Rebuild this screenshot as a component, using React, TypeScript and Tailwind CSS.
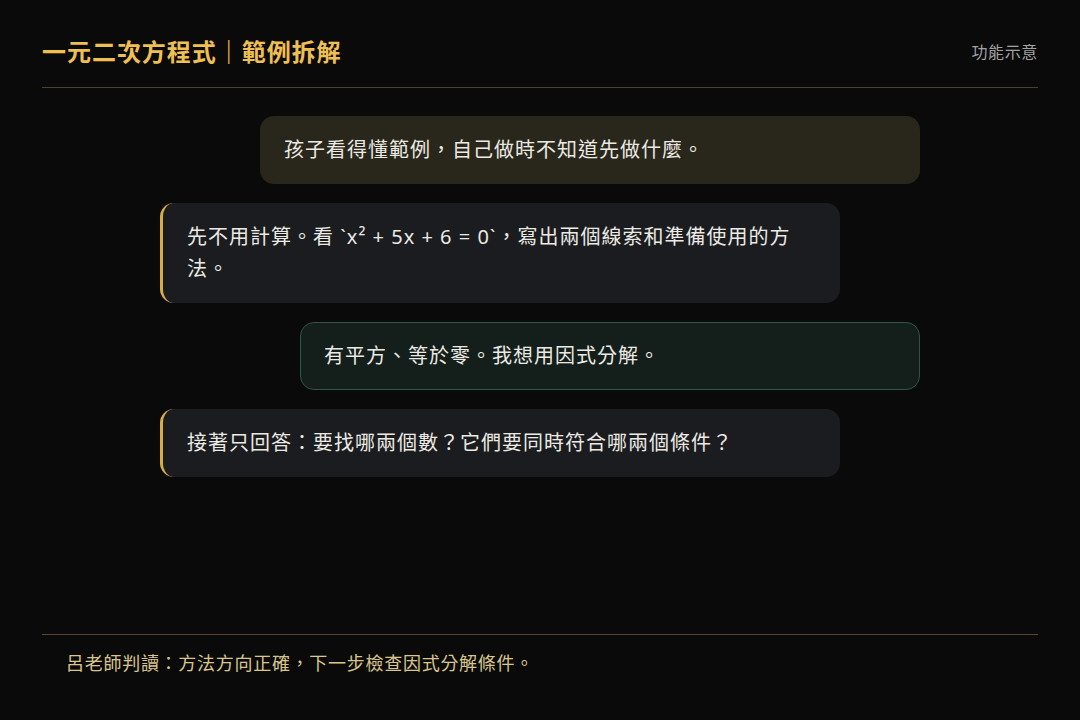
const messages = [
  { role: 'student', text: '孩子看得懂範例，自己做時不知道先做什麼。', width: 'w-[660px]' },
  { role: 'teacher', text: '先不用計算。看 `x² + 5x + 6 = 0`，寫出兩個線索和準備使用的方法。', width: 'w-[680px]' },
  { role: 'answer', text: '有平方、等於零。我想用因式分解。', width: 'w-[620px]' },
  { role: 'teacher', text: '接著只回答：要找哪兩個數？它們要同時符合哪兩個條件？', width: 'w-[680px]' },
];

function Bubble({ role, text, width }: { role: string; text: string; width: string }) {
  if (role === 'teacher') {
    return (
      <div className={`${width} self-start rounded-[14px] border-l-[3px] border-[#d9ad45] bg-[#1b1c1f] py-[18px] pl-[24px] pr-[40px]`}>
        <p className="text-[20px] leading-[1.6] tracking-[0.05em] text-[#eceae4]">{text}</p>
      </div>
    );
  }
  if (role === 'answer') {
    return (
      <div className={`${width} self-end rounded-[14px] border border-[#2c5646] bg-[#141e1b] py-[17px] px-[23px]`}>
        <p className="text-[20px] leading-[1.6] tracking-[0.05em] text-[#eceae4]">{text}</p>
      </div>
    );
  }
  return (
    <div className={`${width} self-end rounded-[14px] bg-[#29271b] py-[18px] px-[24px]`}>
      <p className="text-[20px] leading-[1.6] tracking-[0.05em] text-[#eceae4]">{text}</p>
    </div>
  );
}

export default function App() {
  return (
    <div
      className="flex min-h-screen flex-col bg-[#0a0a0a] px-[42px]"
      style={{ fontFamily: '"Noto Sans", "Noto Sans CJK TC", sans-serif' }}
    >
      {/* Header */}
      <header className="flex items-center justify-between border-b border-[#4a432a] pt-[35px] pb-[18px]">
        <h1 className="text-[24px] font-bold leading-[1.4] tracking-[0.04em] text-[#eebf52]">
          一元二次方程式｜範例拆解
        </h1>
        <span className="text-[16px] tracking-[0.04em] text-[#a3a3a3]">功能示意</span>
      </header>

      {/* Conversation */}
      <main className="mx-auto mt-[28px] flex w-[760px] flex-col gap-[19px]">
        {messages.map((m, i) => (
          <Bubble key={i} role={m.role} text={m.text} width={m.width} />
        ))}
      </main>

      {/* Footer verdict */}
      <footer className="mt-auto border-t border-[#54492c] px-[24px] pt-[14px] pb-[42px]">
        <p className="text-[18px] leading-[1.6] tracking-[0.04em] text-[#d9c68c]">
          呂老師判讀：方法方向正確，下一步檢查因式分解條件。
        </p>
      </footer>
    </div>
  );
}
